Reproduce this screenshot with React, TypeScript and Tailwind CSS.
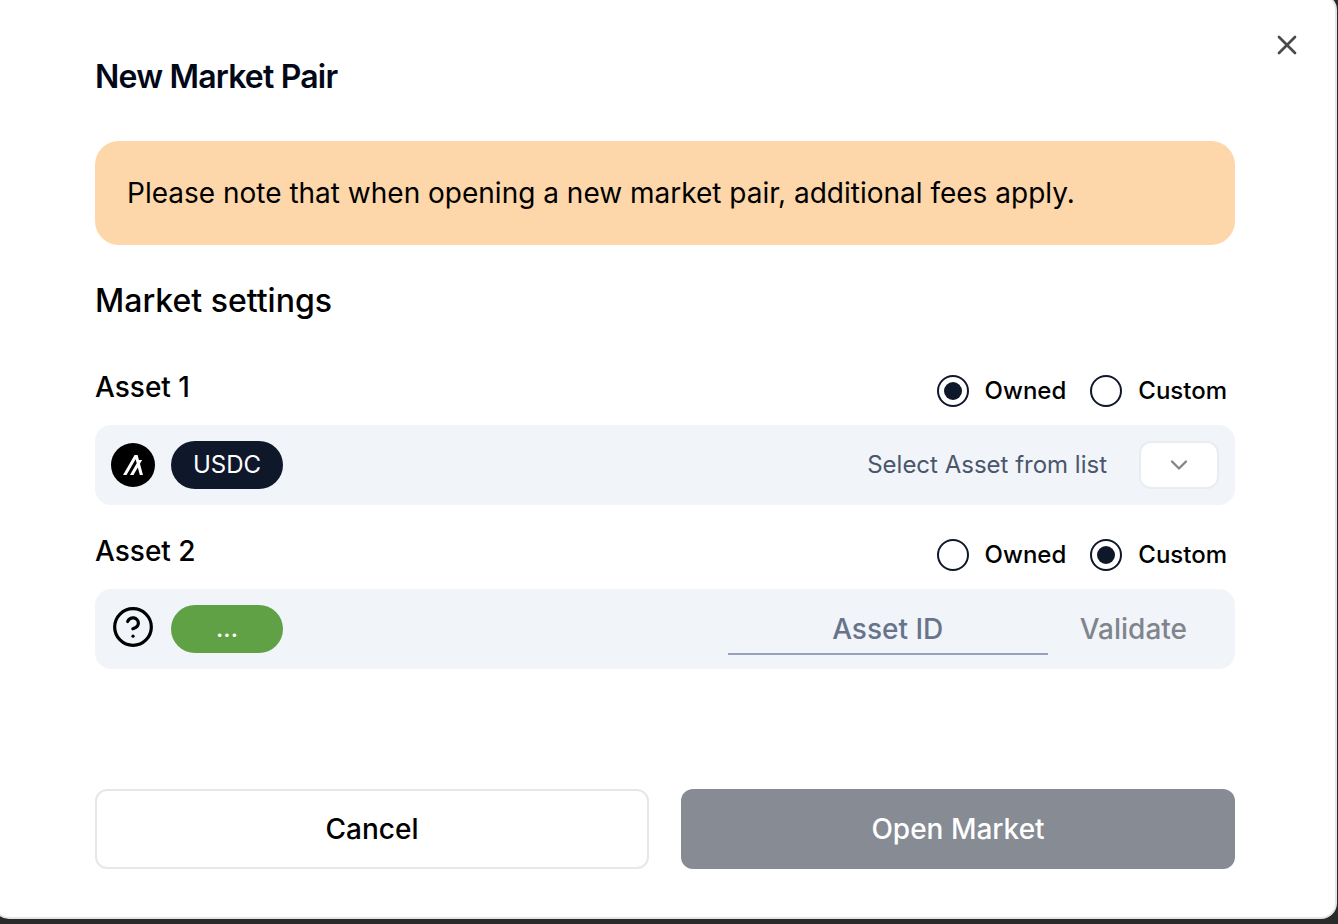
import { useState } from 'react';
import { ChevronDown, CircleHelp, X } from 'lucide-react';
import { SiAlgorand } from 'react-icons/si';

type AssetSource = 'owned' | 'custom';

interface SourcePickerProps {
  name: string;
  label: string;
  value: AssetSource;
  onChange: (value: AssetSource) => void;
}

const sources: { value: AssetSource; label: string }[] = [
  { value: 'owned', label: 'Owned' },
  { value: 'custom', label: 'Custom' },
];

function SourcePicker({ name, label, value, onChange }: SourcePickerProps) {
  return (
    <div role="radiogroup" aria-label={label} className="mt-0.5 flex gap-6 pr-2">
      {sources.map((source) => (
        <label key={source.value} className="flex items-center gap-4 text-2xl font-medium">
          <input
            type="radio"
            name={name}
            value={source.value}
            checked={value === source.value}
            onChange={() => onChange(source.value)}
            className="grid size-8 appearance-none place-content-center rounded-full border-2 border-slate-900 bg-white before:size-[18px] before:rounded-full checked:before:bg-slate-900"
          />
          {source.label}
        </label>
      ))}
    </div>
  );
}

export default function App() {
  const [first, setFirst] = useState<AssetSource>('owned');
  const [second, setSecond] = useState<AssetSource>('custom');
  const [assetId, setAssetId] = useState('');

  return (
    <div className="min-h-screen overflow-hidden bg-[#2a2a2a] pr-px font-['Inter',sans-serif] text-black [font-optical-sizing:none]">
      <div
        role="dialog"
        aria-labelledby="dialog-title"
        className="relative -mt-1.5 -ml-[7px] rounded-2xl border-2 border-[#e5e5e5] bg-white px-[100px] pt-[63px] pb-12"
      >
        <button type="button" aria-label="Close" className="absolute top-[33px] right-8 text-[#4a4a4a]">
          <X className="size-8" strokeWidth={2} />
        </button>

        <h1 id="dialog-title" className="text-[32px] leading-9 font-semibold tracking-tight text-[#020817]">
          New Market Pair
        </h1>

        <p className="mt-[46px] rounded-3xl bg-[#fdd7aa] px-8 py-8 text-[28px] leading-10">
          Please note that when opening a new market pair, additional fees apply.
        </p>

        <h2 className="mt-9 text-[32px] leading-10 font-medium">Market settings</h2>

        {/* Asset 1 */}
        <section className="mt-[52px]">
          <div className="flex items-start justify-between">
            <h3 className="text-[28px] leading-7 font-medium">Asset 1</h3>
            <SourcePicker name="asset-1" label="Asset 1 source" value={first} onChange={setFirst} />
          </div>
          <div className="mt-[18px] flex h-20 items-center rounded-2xl bg-slate-100 px-4">
            <span className="flex size-11 items-center justify-center rounded-full bg-black text-white">
              <SiAlgorand className="size-5" />
            </span>
            <span className="ml-4 flex h-12 w-28 items-center justify-center rounded-full bg-slate-900 text-2xl text-white">
              USDC
            </span>
            <label htmlFor="owned-asset" className="ml-auto text-2xl text-[#4b566b]">
              Select Asset from list
            </label>
            <div className="relative ml-8">
              <select
                id="owned-asset"
                defaultValue=""
                className="block h-12 w-20 appearance-none rounded-xl border-2 border-[#e9ecf0] bg-white"
              >
                <option value=""></option>
              </select>
              <ChevronDown
                className="pointer-events-none absolute inset-0 m-auto size-7 text-[#858585]"
                strokeWidth={2}
              />
            </div>
          </div>
        </section>

        {/* Asset 2 */}
        <section className="mt-8">
          <div className="flex items-start justify-between">
            <h3 className="text-[28px] leading-7 font-medium">Asset 2</h3>
            <SourcePicker name="asset-2" label="Asset 2 source" value={second} onChange={setSecond} />
          </div>
          <div className="mt-[18px] flex h-20 items-center rounded-2xl bg-slate-100 px-4">
            <span className="pb-1">
              <CircleHelp className="size-11" strokeWidth={1.75} />
            </span>
            <span className="ml-4 flex h-12 w-28 items-center justify-center rounded-full bg-[#60a146] text-2xl font-medium text-white">
              ...
            </span>
            <input
              type="text"
              aria-label="Asset ID"
              placeholder="Asset ID"
              value={assetId}
              onChange={(e) => setAssetId(e.target.value)}
              className="ml-auto h-[52px] w-80 border-b-2 border-[#98a2bd] bg-transparent pt-0.5 text-center text-[28px] font-medium placeholder:text-[#67748b]"
            />
            <button type="button" disabled className="px-8 text-[28px] font-medium text-[#80858d]">
              Validate
            </button>
          </div>
        </section>

        <div className="mt-[120px] grid grid-cols-2 gap-8">
          <button type="button" className="h-20 rounded-xl border-2 border-[#e5e7e9] bg-white text-[28px] font-medium">
            Cancel
          </button>
          <button type="button" disabled className="h-20 rounded-xl bg-[#868b94] text-[28px] font-medium text-white">
            Open Market
          </button>
        </div>
      </div>
    </div>
  );
}
